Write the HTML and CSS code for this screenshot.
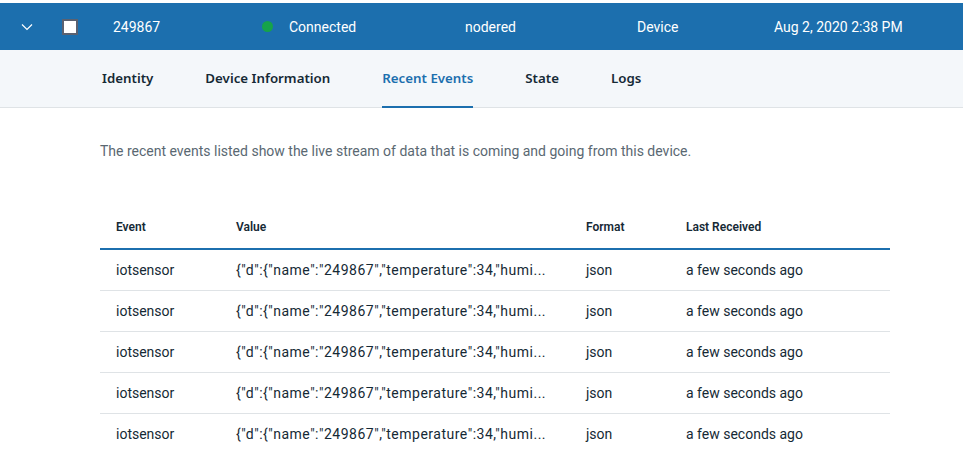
FILE: index.html
```html
<!DOCTYPE html>
<html>
<head>
<meta charset="utf-8">
<link rel="stylesheet" href="styles.css">
</head>
<body>
<div class="device-row">
  <div class="cell chev">
    <svg width="12" height="8" viewBox="0 0 12 8"><path d="M1 1.5 L6 6.5 L11 1.5" fill="none" stroke="#ffffff" stroke-width="1.2"/></svg>
  </div>
  <div class="cell check"><span class="box"></span></div>
  <div class="cell id">249867</div>
  <div class="cell status"><span class="dot"></span>Connected</div>
  <div class="cell owner">nodered</div>
  <div class="cell type">Device</div>
  <div class="cell date">Aug 2, 2020 2:38 PM</div>
</div>
<nav class="tabs">
  <span class="tab">Identity</span>
  <span class="tab">Device Information</span>
  <span class="tab active">Recent Events</span>
  <span class="tab">State</span>
  <span class="tab">Logs</span>
</nav>
<main class="content">
  <p class="desc">The recent events listed show the live stream of data that is coming and going from this device.</p>
  <table class="events">
    <thead>
      <tr><th class="c-event">Event</th><th class="c-value">Value</th><th class="c-format">Format</th><th class="c-last">Last Received</th></tr>
    </thead>
    <tbody>
      <tr><td>iotsensor</td><td class="val">{"d":{"name":"249867","temperature":34,"humi...</td><td>json</td><td>a few seconds ago</td></tr>
      <tr><td>iotsensor</td><td class="val">{"d":{"name":"249867","temperature":34,"humi...</td><td>json</td><td>a few seconds ago</td></tr>
      <tr><td>iotsensor</td><td class="val">{"d":{"name":"249867","temperature":34,"humi...</td><td>json</td><td>a few seconds ago</td></tr>
      <tr><td>iotsensor</td><td class="val">{"d":{"name":"249867","temperature":34,"humi...</td><td>json</td><td>a few seconds ago</td></tr>
      <tr><td>iotsensor</td><td class="val">{"d":{"name":"249867","temperature":34,"humi...</td><td>json</td><td>a few seconds ago</td></tr>
    </tbody>
  </table>
</main>
</body>
</html>
```
FILE: styles.css
```css
html, body {
  margin: 0;
  padding: 0;
  background: #ffffff;
  font-family: Roboto, "Noto Sans", "Liberation Sans", sans-serif;
}
body {
  padding-top: 3px;
}
.device-row {
  display: flex;
  align-items: center;
  height: 47px;
  background: #1c6fae;
  color: #ffffff;
  font-size: 14px;
}
.cell {
  display: flex;
  align-items: center;
}
.chev {
  width: 62px;
  padding-left: 21px;
  box-sizing: border-box;
  height: 100%;
}
.check {
  width: 51px;
}
.box {
  width: 12px;
  height: 12px;
  background: #ffffff;
  border: 2px solid #5a6170;
}
.id {
  width: 149px;
}
.status {
  width: 203px;
}
.dot {
  width: 11px;
  height: 11px;
  border-radius: 50%;
  background: #16a34a;
  margin-right: 16px;
}
.owner {
  width: 172px;
}
.type {
  width: 137px;
}
.tabs {
  display: flex;
  background: #f4f7fa;
  border-bottom: 1px solid #dfe3e6;
  padding-left: 76px;
  box-sizing: border-box;
  height: 58px;
}
.tab {
  display: flex;
  align-items: center;
  margin: 0 26px -1px 26px;
  font-family: "Noto Sans", Roboto, sans-serif;
  font-size: 13.3px;
  font-weight: 600;
  color: #152935;
  border-bottom: 2px solid transparent;
}
.tab.active {
  color: #1c6fae;
  border-bottom-color: #1c6fae;
}
.content {
  padding: 0 73px 0 100px;
}
.desc {
  margin: 33px 0 0 0;
  font-size: 14px;
  line-height: 20px;
  color: #5a6872;
}
.events {
  margin-top: 45px;
  width: 790px;
  border-collapse: collapse;
  font-size: 14px;
  color: #152935;
}
.events th {
  text-align: left;
  font-size: 12px;
  font-weight: 600;
  height: 42px;
  padding: 0 0 0 16px;
  border-bottom: 2px solid #1c6fae;
  vertical-align: middle;
}
.events td {
  height: 40px;
  padding: 0 0 0 16px;
  border-bottom: 1px solid #dfe3e6;
  vertical-align: middle;
  white-space: nowrap;
}
.events td.val {
  letter-spacing: 0.5px;
}
.c-event { width: 104px; }
.c-value { width: 334px; }
.c-format { width: 84px; }
```
